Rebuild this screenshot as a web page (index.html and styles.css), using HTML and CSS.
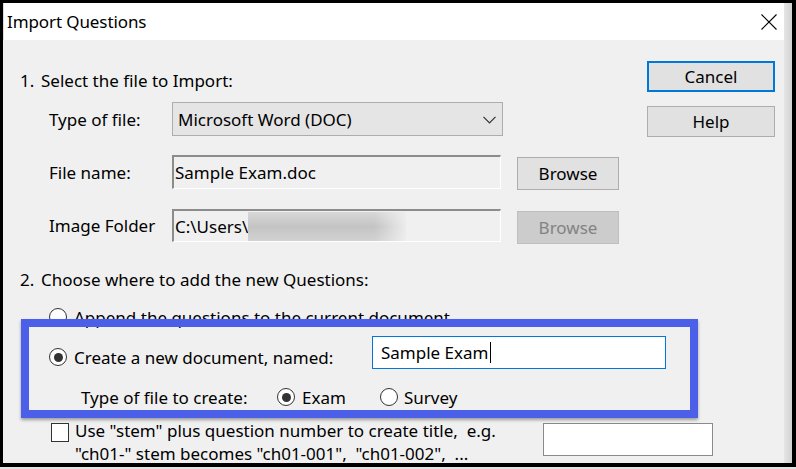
FILE: index.html
```html
<!DOCTYPE html>
<html>
<head>
<meta charset="utf-8">
<link rel="stylesheet" href="styles.css">
</head>
<body>
<div class="window">
  <div class="main">
    <div class="titlebar">
      <span class="title">Import Questions</span>
      <svg class="close" width="16" height="16" viewBox="0 0 16 16"><path d="M0.5 0.5 L15.5 15.5 M15.5 0.5 L0.5 15.5" stroke="#000" stroke-width="1.1" fill="none"/></svg>
    </div>
    <div class="client">
      <div class="top">
        <div class="sec1">
          <div class="heading"><span class="num">1.</span>Select the file to Import:</div>
          <div class="row r-type">
            <span class="label">Type of file:</span>
            <div class="combo"><span>Microsoft Word (DOC)</span><svg class="chev" width="13" height="8" viewBox="0 0 13 8"><path d="M0.5 0.8 L6.5 6.8 L12.5 0.8" stroke="#333" stroke-width="1.2" fill="none"/></svg></div>
          </div>
          <div class="row r-file">
            <span class="label">File name:</span>
            <div class="field">Sample Exam.doc</div>
            <div class="btn browse">Browse</div>
          </div>
          <div class="row r-img">
            <span class="label">Image Folder</span>
            <div class="field">C:\Users\<span class="redact"></span></div>
            <div class="btn browse disabled">Browse</div>
          </div>
        </div>
        <div class="side">
          <div class="btn default">Cancel</div>
          <div class="btn help">Help</div>
        </div>
      </div>
      <div class="sec2">
        <div class="heading"><span class="num">2.</span>Choose where to add the new Questions:</div>
        <div class="opt append"><span class="radio"></span><span class="opt-text">Append the questions to the current document.</span></div>
        <div class="opt create">
          <div class="create-label"><span class="radio on"></span><span class="opt-text">Create a new document, named:</span></div>
          <div class="name-input">Sample Exam<span class="caret"></span></div>
        </div>
        <div class="opt type">
          <span class="type-label">Type of file to create:</span>
          <span class="radio on"></span><span class="opt-text exam">Exam</span>
          <span class="radio"></span><span class="opt-text survey">Survey</span>
        </div>
        <div class="opt stem">
          <span class="check"></span>
          <div class="stem-text">Use "stem" plus question number to create title,&nbsp; e.g.<br>"ch01-" stem becomes "ch01-001",&nbsp; "ch01-002",&nbsp; ...</div>
          <div class="stem-input"></div>
        </div>
      </div>
    </div>
  </div>
  <div class="edge"></div>
  <div class="highlight"></div>
</div>
</body>
</html>
```

FILE: styles.css
```css
* { box-sizing: border-box; }
html, body { margin: 0; padding: 0; }
body {
  background: #e4e4e4;
  font-family: "Noto Sans", "Open Sans", sans-serif;
  font-size: 17px;
  color: #000;
  width: 796px;
  height: 469px;
  overflow: hidden;
}
.window {
  position: relative;
  width: 796px;
  height: 467px;
  border-style: solid;
  border-color: #000;
  border-width: 3px 4px 4px 3px;
  display: flex;
  background: #f0f0f0;
}
.main {
  flex: 1;
  display: flex;
  flex-direction: column;
  min-width: 0;
}
.edge {
  width: 8px;
  background: linear-gradient(to right, #e6e6e6, #d2d2d2);
}
.titlebar {
  height: 37px;
  background: #fff;
  display: flex;
  align-items: center;
  justify-content: space-between;
  padding: 0 7px 0 3px;
  border-left: 1px solid #dcdcdc;
}
.title { font-size: 17px; letter-spacing: -0.1px; }
.close { display: block; margin-top: 1px; }
.client {
  flex: 1;
  padding: 0 9px 0 17px;
  overflow: hidden;
  background: #f0f0f0;
}
.top {
  display: flex;
  justify-content: space-between;
}
.heading {
  height: 25px;
  line-height: 25px;
  white-space: nowrap;
}
.num { display: inline-block; width: 21px; }
.sec1 .heading { margin-top: 28px; }
.row {
  display: flex;
  align-items: flex-start;
  margin-left: 29px;
}
.label {
  width: 123px;
  flex: none;
  align-self: center;
}
.r-type { margin-top: 9px; height: 34px; }
.r-file { margin-top: 19px; height: 34px; }
.r-img { margin-top: 20px; height: 33px; }
.combo {
  width: 331px;
  height: 34px;
  background: #e5e5e5;
  border: 1px solid #adadad;
  display: flex;
  align-items: center;
  justify-content: space-between;
  padding: 0 6px 0 5px;
}
.chev { display: block; margin-top: 2px; }
.field {
  width: 329px;
  height: 100%;
  background: #f0f0f0;
  border-top: 2px solid #8c8c8c;
  border-left: 2px solid #8c8c8c;
  border-bottom: 1px solid #fff;
  border-right: 1px solid #fff;
  padding-left: 1px;
  display: flex;
  align-items: center;
  white-space: nowrap;
  overflow: hidden;
}
.redact {
  display: inline-block;
  width: 158px;
  height: 29px;
  background: linear-gradient(to right, rgba(240,240,240,0) 0, rgba(240,240,240,0) 80%, rgba(240,240,240,0.9) 100%),
              linear-gradient(to bottom, #d8d8d8, #c4c4c4 50%, #d2d2d2);
}
.btn {
  border: 1px solid #adadad;
  background: #e1e1e1;
  display: flex;
  align-items: center;
  justify-content: center;
  white-space: nowrap;
}
.browse {
  width: 102px;
  height: 33px;
  margin-left: 16px;
  margin-top: 2px;
}
.browse.disabled {
  background: #cccccc;
  border-color: #bfbfbf;
  color: #838383;
}
.side {
  width: 128px;
  display: flex;
  flex-direction: column;
}
.default {
  margin-top: 21px;
  height: 31px;
  border: 2px solid #0078d7;
}
.help {
  margin-top: 14px;
  height: 31px;
}
.sec2 .heading { margin-top: 25px; }
.opt {
  display: flex;
  align-items: center;
  margin-left: 29px;
  white-space: nowrap;
}
.radio {
  flex: none;
  width: 18px;
  height: 18px;
  border-radius: 50%;
  border: 1px solid #333;
  background: #fff;
  display: flex;
  align-items: center;
  justify-content: center;
}
.radio.on::after {
  content: "";
  width: 9px;
  height: 9px;
  border-radius: 50%;
  background: #333;
}
.opt-text { margin-left: 7px; }
.append { margin-top: 13px; height: 24px; }
.create { margin-top: 7px; height: 33px; }
.create-label {
  display: flex;
  align-items: center;
  width: 323px;
  margin-top: 9px;
}
.name-input {
  width: 294px;
  height: 33px;
  background: #fff;
  border: 1px solid #0078d7;
  display: flex;
  align-items: center;
  padding-left: 8px;
}
.caret {
  display: inline-block;
  width: 1px;
  height: 21px;
  background: #000;
  margin-left: 1px;
}
.type { margin-top: 16px; height: 24px; padding-left: 32px; }
.type-label { width: 196px; flex: none; }
.exam { width: 78px; }
.survey { margin-left: 6px; }
.stem {
  margin-top: 13px;
  align-items: flex-start;
}
.check {
  flex: none;
  width: 18px;
  height: 19px;
  border: 1px solid #333;
  background: #fff;
  margin-left: 2px;
  margin-top: 1px;
}
.stem-text {
  width: 474px;
  padding-left: 6px;
  line-height: 23px;
  margin-top: -3px;
}
.stem-input {
  width: 170px;
  height: 33px;
  background: #fff;
  border: 1px solid #8a8a8a;
  margin-top: 1px;
}
.highlight {
  position: absolute;
  left: 18px;
  top: 316px;
  width: 677px;
  height: 99px;
  border: 8px solid #4b5fe9;
  box-shadow: 0 2px 3px rgba(0,0,0,0.35);
}
```
